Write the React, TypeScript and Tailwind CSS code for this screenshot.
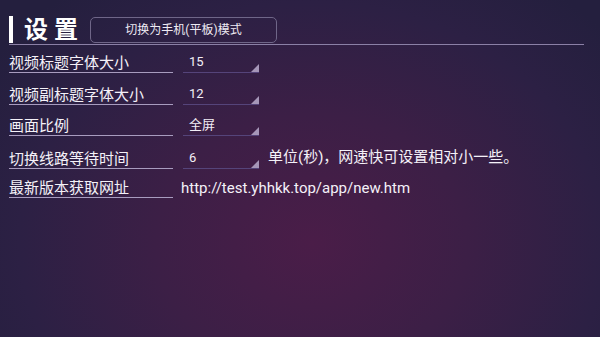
import React from "react";

type Row = {
  label: string;
  rowClass: string;
  value?: string;
  note?: string;
  link?: string;
};

const rows: Row[] = [
  { label: "视频标题字体大小", rowClass: "h-[28px]", value: "15" },
  { label: "视频副标题字体大小", rowClass: "h-[32px]", value: "12" },
  { label: "画面比例", rowClass: "h-[31px]", value: "全屏" },
  {
    label: "切换线路等待时间",
    rowClass: "h-[33px]",
    value: "6",
    note: "单位(秒)，网速快可设置相对小一些。",
  },
  { label: "最新版本获取网址", rowClass: "h-[29px]", link: "http://test.yhhkk.top/app/new.htm" },
];

function Spinner({ value }: { value: string }) {
  return (
    <div className="relative ml-[10px] flex h-[22px] w-[76px] items-end border-b border-[#55447a] pb-[2px] pl-[6px] text-[13px] leading-[16px] text-[#f2eef6]">
      <span>{value}</span>
      {/* corner arrow of the android spinner */}
      <svg className="absolute bottom-[0px] right-[0px]" width="8" height="8" viewBox="0 0 8 8">
        <polygon points="8,0 8,8 0,8" fill="#a596b8" />
      </svg>
    </div>
  );
}

export default function App() {
  return (
    <main className="relative h-[337px] w-[600px] overflow-hidden bg-[radial-gradient(ellipse_65%_95%_at_52%_72%,#4a1d48_0%,#3c1f46_40%,#2c2044_75%,#241f3e_100%)] font-['Roboto','Noto_Sans_CJK_SC',sans-serif] text-white">
      <div className="pl-[9px] pr-[16px] pt-[16px]">
        <header className="flex h-[29px] items-center border-b border-[#8b80a6] pb-[1px]">
          <div className="h-[27px] w-[4px] bg-white" />
          <h1 className="ml-[11px] text-[24px] font-bold leading-none tracking-[6px]">设置</h1>
          <button className="ml-[6px] h-[26px] w-[187px] rounded-[5px] border border-[#6f6688] text-[12px] text-[#eeeaf3]">
            切换为手机(平板)模式
          </button>
        </header>

        {rows.map((r) => (
          <div key={r.label} className={["flex items-end", r.rowClass].join(" ")}>
            <div className="w-[164px] border-b border-[#a89cbf] text-[15px] leading-[18px] text-[#f4f1f8]">
              {r.label}
            </div>
            {r.value && <Spinner value={r.value} />}
            {r.note && (
              <span className="mb-[3px] ml-[9px] text-[15px] leading-[18px] text-[#f4f1f8]">{r.note}</span>
            )}
            {r.link && (
              <span className="mb-[1px] ml-[8px] text-[15px] leading-[18px] text-[#f4f1f8]">{r.link}</span>
            )}
          </div>
        ))}
      </div>
    </main>
  );
}
